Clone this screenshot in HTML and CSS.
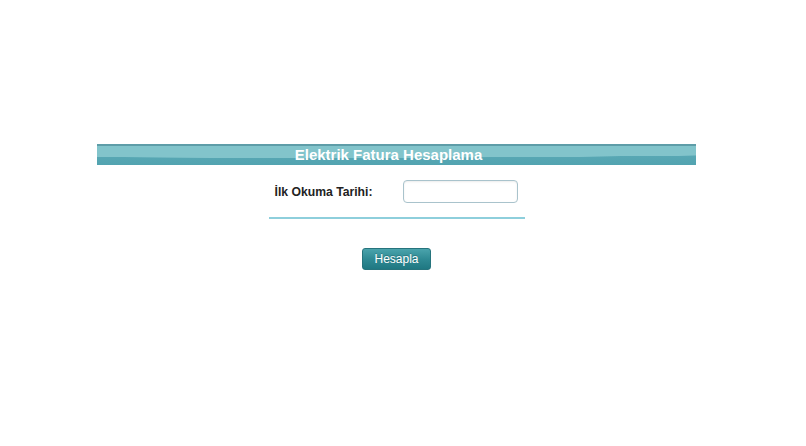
FILE: index.html
```html
<!DOCTYPE html>
<html lang="tr">
<head>
<meta charset="utf-8">
<title>Elektrik Fatura Hesaplama</title>
<link rel="stylesheet" href="styles.css">
</head>
<body>
<div class="page">
  <div class="panel">
    <div class="header"><span class="title">Elektrik Fatura Hesaplama</span></div>
    <div class="form">
      <div class="row">
        <label class="label" for="t1">İlk Okuma Tarihi:</label>
        <input class="field" id="t1" type="text">
      </div>
      <div class="rule"></div>
      <button class="btn" type="button">Hesapla</button>
    </div>
  </div>
</div>
</body>
</html>
```
FILE: styles.css
```css
html, body {
  margin: 0;
  padding: 0;
  background: #ffffff;
  font-family: "Liberation Sans", Arial, sans-serif;
}
.page {
  padding-top: 144px;
  padding-left: 97px;
}
.panel {
  width: 599px;
}
.header {
  height: 21px;
  box-sizing: border-box;
  border-top: 2px solid #5e9da8;
  background:
    radial-gradient(ellipse 1100px 36px at 35% -24px, #82c4cb 0 99%, transparent 100%),
    linear-gradient(to bottom, #5eacb8, #52a3b0);
  display: flex;
  justify-content: center;
  align-items: center;
  padding-right: 16px;
}
.title {
  color: #ffffff;
  font-weight: bold;
  font-size: 15px;
  line-height: 16px;
  margin-top: -1px;
}
.form {
  display: flex;
  flex-direction: column;
  align-items: center;
  padding-top: 15px;
}
.row {
  display: flex;
  align-items: center;
  gap: 31px;
  padding-left: 0;
}
.label {
  font-size: 12.2px;
  font-weight: bold;
  color: #222222;
}
.field {
  box-sizing: border-box;
  width: 115px;
  height: 23px;
  border: 1px solid #a9c3cc;
  border-radius: 4px;
  box-shadow: inset 0 1px 2px rgba(0,0,0,0.08);
  margin: 0;
  padding: 0 4px;
  background: #fff;
}
.rule {
  width: 256px;
  height: 2px;
  background: #8ecfdc;
  margin-top: 14px;
}
.btn {
  margin-top: 29px;
  width: 69px;
  height: 22px;
  border: 1px solid #26747d;
  border-radius: 3px;
  background: linear-gradient(to bottom, #4aa3ac 0%, #2f8a94 50%, #1f7882 100%);
  color: #ffffff;
  font-family: "Liberation Sans", Arial, sans-serif;
  font-size: 12px;
  padding: 0;
  text-shadow: 0 -1px 0 rgba(0,0,0,0.2);
}
```
